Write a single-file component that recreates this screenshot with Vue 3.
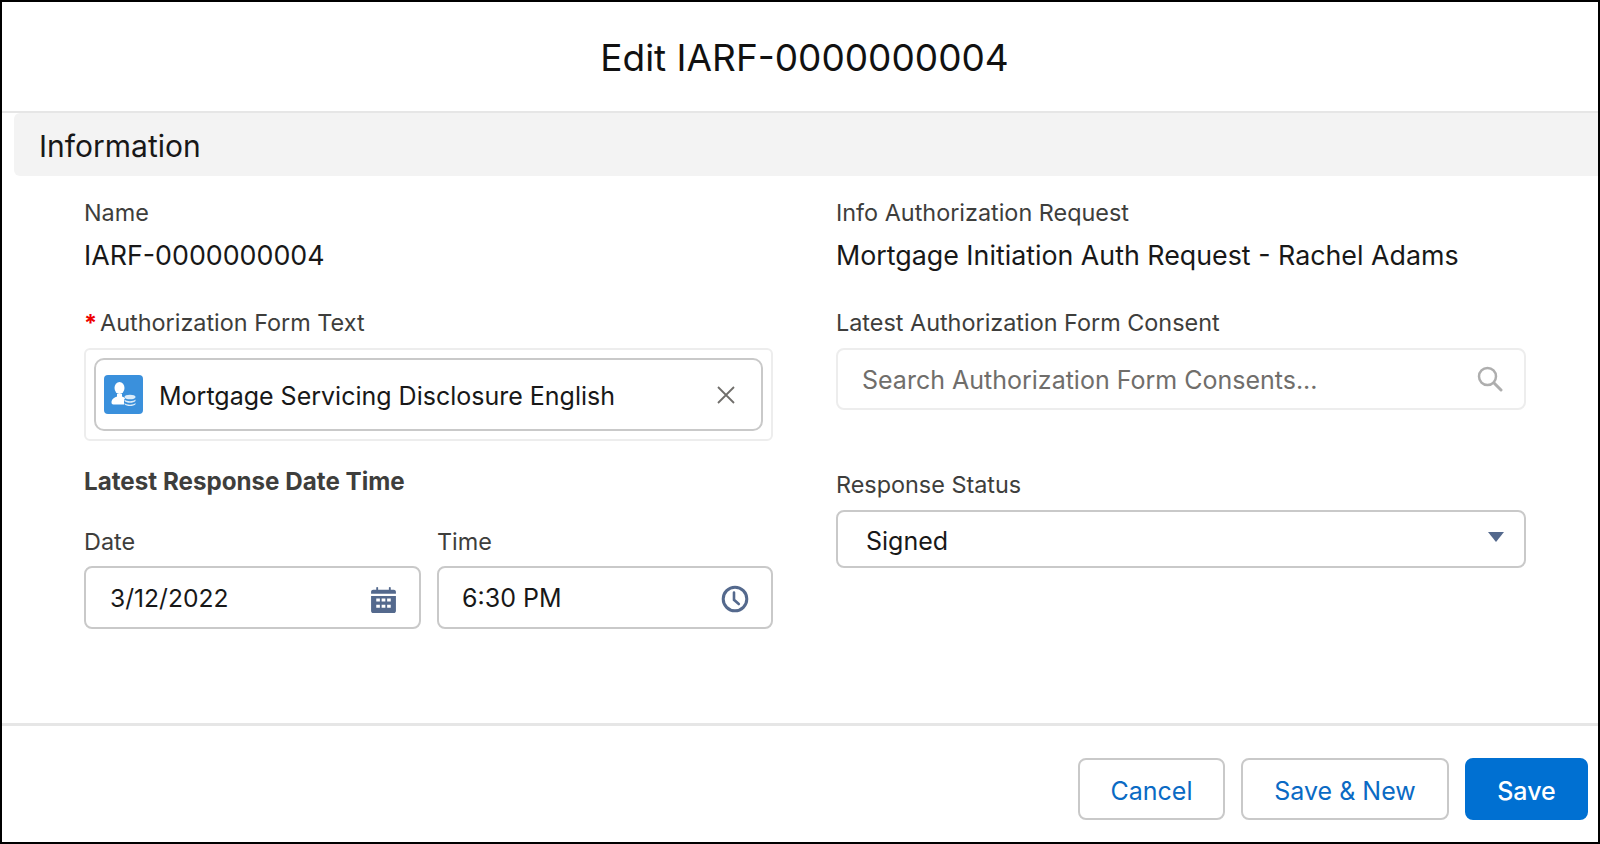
<template>
  <div class="frame">
    <header class="title-bar"><h1>Edit IARF-0000000004</h1></header>
    <h2 class="section">Information</h2>
    <main class="form">
      <section class="col">
        <div class="label name-label">Name</div>
        <div class="value">IARF-0000000004</div>
        <div class="label auth-label"><span class="req">*</span>Authorization Form Text</div>
        <div class="lookup-outer">
          <div class="pill">
            <span class="entity">
              <svg viewBox="0 0 39 39" width="39" height="39">
                <ellipse cx="15.500" cy="13" rx="5" ry="6" fill="#fff"/>
                <path d="M7.500 27.500c0-3.500 3-5 5.500-6v-2.500h5v2.500c1.300.4 2.400 1 3.200 1.700-.8.500-1.200 1.200-1.200 2v4.300H9.300c-1.100 0-1.800-.8-1.800-2z" fill="#fff"/>
                <ellipse cx="26" cy="22" rx="5.500" ry="2.300" fill="#dcecf9"/>
                <path d="M20.500 24.500c1 1.100 3.300 1.700 5.500 1.700s4.500-.6 5.500-1.700v1.500c-.8 1.200-3.300 1.800-5.500 1.800s-4.700-.6-5.500-1.800z" fill="#dcecf9"/>
                <path d="M20.500 28c1 1.100 3.300 1.700 5.500 1.700s4.500-.6 5.500-1.700v1.300c-.8 1.200-3.300 1.800-5.500 1.800s-4.700-.6-5.500-1.800z" fill="#dcecf9"/>
              </svg>
            </span>
            <span class="pill-text">Mortgage Servicing Disclosure English</span>
            <svg class="close" viewBox="0 0 20 20" width="20" height="20">
              <path d="M2 2l16 16M18 2L2 18" stroke="#706e6b" stroke-width="1.800" fill="none"/>
            </svg>
          </div>
        </div>
        <div class="bold-label">Latest Response Date Time</div>
        <div class="datetime">
          <div class="dt-field">
            <div class="label">Date</div>
            <div class="input">
              <span class="date-text">3/12/2022</span>
              <svg class="field-icon" viewBox="0 0 26 28" width="27" height="29">
                <path d="M1 8.500V6.500c0-1.200 1-2 2-2h3V2.500c0-.8 1.800-.8 1.800 0v2h10.400v-2c0-.8 1.800-.8 1.800 0v2h3c1 0 2 .8 2 2v2z" fill="#54698d"/>
                <path fill-rule="evenodd" d="M1 10.500h24V25c0 1.100-.9 2-2 2H3c-1.100 0-2-.9-2-2zM6 13v3h3.500v-3zm5.200 0v3h3.600v-3zm5.300 0v3H20v-3zM6 19v3h3.500v-3zm5.200 0v3h3.600v-3zm5.300 0v3H20v-3z" fill="#54698d"/>
              </svg>
            </div>
          </div>
          <div class="dt-field">
            <div class="label">Time</div>
            <div class="input">
              <span class="time-text">6:30 PM</span>
              <svg class="field-icon" viewBox="0 0 28 28" width="28" height="28">
                <circle cx="14" cy="14" r="11.800" stroke="#54698d" stroke-width="3" fill="none"/>
                <path d="M13 7.500v7.300l4.800 4.200" stroke="#54698d" stroke-width="2.600" fill="none" stroke-linecap="round"/>
              </svg>
            </div>
          </div>
        </div>
      </section>
      <section class="col">
        <div class="label name-label">Info Authorization Request</div>
        <div class="value">Mortgage Initiation Auth Request - Rachel Adams</div>
        <div class="label auth-label">Latest Authorization Form Consent</div>
        <div class="search">
          <span class="search-text">Search Authorization Form Consents...</span>
          <svg viewBox="0 0 26 26" width="26" height="26">
            <circle cx="10.500" cy="10.500" r="8.500" stroke="#aeaeae" stroke-width="2.500" fill="none"/>
            <path d="M16.800 16.800l7.200 7.200" stroke="#aeaeae" stroke-width="3" stroke-linecap="round"/>
          </svg>
        </div>
        <div class="label status-label">Response Status</div>
        <div class="select">
          <span class="select-text">Signed</span>
          <span class="caret"></span>
        </div>
      </section>
    </main>
    <footer class="footer">
      <button class="btn cancel">Cancel</button>
      <button class="btn savenew">Save &amp; New</button>
      <button class="btn primary">Save</button>
    </footer>
  </div>
</template>

<script setup>
</script>

<style>
html, body { margin: 0; background: #fff; }
</style>

<style scoped>
.frame {
  width: 1600px;
  height: 844px;
  box-sizing: border-box;
  border: 2px solid #000;
  background: #fff;
  font-family: Inter, "Liberation Sans", sans-serif;
  color: #181818;
  display: flex;
  flex-direction: column;
  overflow: hidden;
}
.title-bar {
  height: 109px;
  flex: none;
  border-bottom: 2px solid #e6e6e6;
  display: flex;
  align-items: center;
  justify-content: center;
  padding-left: 9px;
}
h1 {
  margin: 2px 0 0;
  font-size: 37px;
  font-weight: 400;
  line-height: 40px;
  color: #111;
}
.section {
  margin: 0 0 0 12px;
  height: 60px;
  padding-top: 3px;
  flex: none;
  background: #f3f3f3;
  border-radius: 6px 0 0 6px;
  padding-left: 25px;
  font-size: 30px;
  font-weight: 400;
  line-height: 60px;
  color: #181818;
}
.form {
  flex: 1;
  display: grid;
  grid-template-columns: 689px 690px;
  column-gap: 63px;
  padding: 25px 0 0 82px;
}
.col { display: flex; flex-direction: column; }
.label {
  font-size: 23.400px;
  line-height: 24px;
  color: #3e3e3c;
}
.value {
  margin-top: 18px;
  font-size: 26.800px;
  line-height: 24px;
  color: #181818;
}
.auth-label { margin-top: 44px; }
.req { color: #e00; margin-right: 3px; font-weight: 700; }
.lookup-outer {
  margin-top: 13px;
  height: 93px;
  box-sizing: border-box;
  border: 2px solid #ededed;
  border-radius: 6px;
  padding: 8px;
}
.pill {
  height: 73px;
  box-sizing: border-box;
  border: 2px solid #c9c9c9;
  border-radius: 10px;
  display: flex;
  align-items: center;
  padding: 0 25px 0 8px;
}
.entity {
  width: 39px;
  height: 39px;
  background: #3a90dc;
  border-radius: 4px;
  flex: none;
  display: block;
}
.entity svg { display: block; }
.pill-text { flex: 1; margin: 3px 0 0 16px; font-size: 25px; color: #181818; }
.bold-label {
  margin-top: 29px;
  font-size: 24.200px;
  line-height: 24px;
  font-weight: 700;
  color: #3e3e3c;
}
.datetime {
  margin-top: 36px;
  display: grid;
  grid-template-columns: 337px 336px;
  column-gap: 16px;
}
.input {
  margin-top: 12px;
  height: 63px;
  box-sizing: border-box;
  border: 2px solid #c9c9c9;
  border-radius: 8px;
  display: flex;
  align-items: center;
  justify-content: space-between;
  padding: 0 22px 0 24px;
  font-size: 25px;
  color: #181818;
}
.date-text { font-size: 24.600px; }
.time-text { margin-left: -1px; }
.field-icon { margin-top: 3px; }
.search {
  margin-top: 13px;
  height: 62px;
  box-sizing: border-box;
  border: 2px solid #ededed;
  border-radius: 8px;
  display: flex;
  align-items: center;
  justify-content: space-between;
  padding: 0 21px 0 24px;
  font-size: 25px;
  color: #706e6b;
}
.search-text { margin-top: 2px; }
.status-label { margin-top: 63px; }
.select {
  margin-top: 13px;
  height: 58px;
  box-sizing: border-box;
  border: 2px solid #c9c9c9;
  border-radius: 8px;
  display: flex;
  align-items: center;
  justify-content: space-between;
  padding: 0 20px 0 28px;
  font-size: 25px;
  color: #181818;
}
.select-text { margin-top: 4px; }
.caret {
  width: 0;
  height: 0;
  border-left: 8px solid transparent;
  border-right: 8px solid transparent;
  border-top: 10px solid #54698d;
  margin-bottom: 4px;
}
.footer {
  flex: none;
  height: 119px;
  box-sizing: border-box;
  border-top: 3px solid #e6e6e6;
  display: flex;
  justify-content: flex-end;
  align-items: flex-start;
  padding: 32px 10px 0 0;
  gap: 16px;
}
.btn {
  height: 62px;
  box-sizing: border-box;
  border: 2px solid #c9c9c9;
  border-radius: 8px;
  background: #fff;
  color: #0a6ac4;
  font-family: inherit;
  font-size: 25px;
  padding: 4px 0 0;
}
.cancel { width: 147px; }
.savenew { width: 208px; }
.primary { width: 123px; background: #0070d2; border-color: #0070d2; color: #fff; font-weight: 500; }
</style>
